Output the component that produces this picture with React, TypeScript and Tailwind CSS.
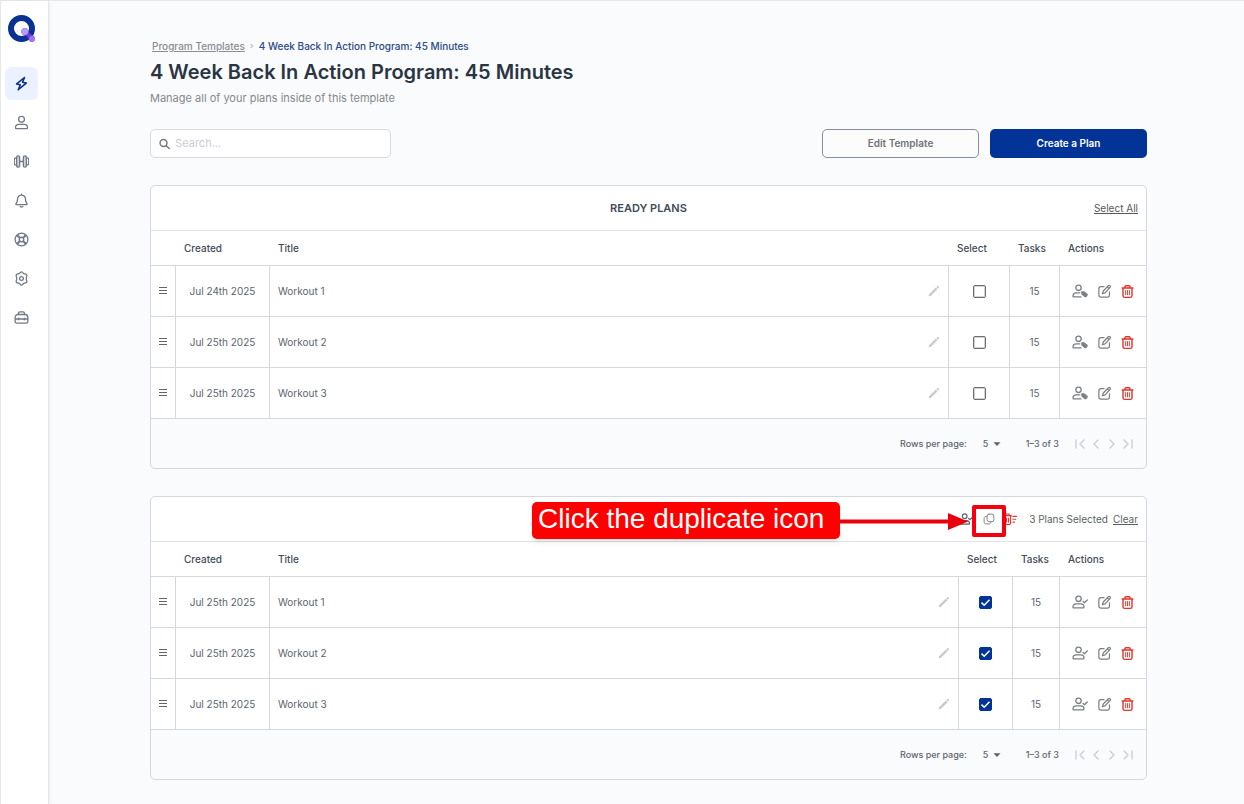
import { useState, type ReactNode } from 'react'

type Plan = { created: string; title: string; tasks: number }

const readyPlans: Plan[] = [
  { created: 'Jul 24th 2025', title: 'Workout 1', tasks: 15 },
  { created: 'Jul 25th 2025', title: 'Workout 2', tasks: 15 },
  { created: 'Jul 25th 2025', title: 'Workout 3', tasks: 15 },
]

const selectedPlans: Plan[] = [
  { created: 'Jul 25th 2025', title: 'Workout 1', tasks: 15 },
  { created: 'Jul 25th 2025', title: 'Workout 2', tasks: 15 },
  { created: 'Jul 25th 2025', title: 'Workout 3', tasks: 15 },
]

function Icon({ children, className = 'size-4', width = 1.3 }: { children: ReactNode; className?: string; width?: number }) {
  return (
    <svg
      viewBox="0 0 16 16"
      className={className}
      fill="none"
      stroke="currentColor"
      strokeWidth={width}
      strokeLinecap="round"
      strokeLinejoin="round"
      aria-hidden="true"
    >
      {children}
    </svg>
  )
}

const navItems = [
  {
    label: 'Programs',
    icon: <path d="M11.2 1.6 2.8 8.4l3.9 1-2.2 5.200 8.600-7-4-1z" />,
  },
  {
    label: 'Clients',
    icon: (
      <>
        <circle cx="8" cy="4.6" r="3.1" />
        <path d="M1.600 13.600c0-2.500 1.600-3.700 3.600-3.700h5.600c2 0 3.600 1.200 3.600 3.700 0 .5-.3.900-.9.900h-11c-.6 0-.9-.4-.9-.9z" />
      </>
    ),
  },
  {
    label: 'Exercises',
    icon: (
      <>
        <rect x="2.800" y="2" width="3.200" height="12" rx="1.500" fill="currentColor" fillOpacity=".3" />
        <rect x="10" y="2" width="3.200" height="12" rx="1.500" fill="currentColor" fillOpacity=".3" />
        <path d="M6 8h4M2.800 4.200h-.6C.9 4.200.3 5 .3 6v4c0 1 .6 1.800 1.900 1.800h.6M13.200 4.200h.6c1.300 0 1.900.8 1.900 1.800v4c0 1-.6 1.800-1.900 1.800h-.6" />
      </>
    ),
  },
  {
    label: 'Notifications',
    icon: (
      <>
        <path d="M8 1.200v1M8 2.200c-2.600 0-4.200 1.900-4.200 4.200 0 3-.9 4-1.700 5-.3.400-.1.900.4.900h11c.5 0 .7-.5.4-.9-.8-1-1.700-2-1.700-5 0-2.300-1.600-4.200-4.200-4.200z" />
        <path d="M6.600 14.400c.7.5 2.100.5 2.800 0" />
      </>
    ),
  },
  {
    label: 'Support',
    icon: (
      <>
        <circle cx="8" cy="8" r="6.800" />
        <circle cx="8" cy="8" r="2.400" />
        <path d="M3.200 3.900 6 6.400M3.900 3.200 6.400 6M12.800 3.900 10 6.400M12.100 3.200 9.600 6M3.200 12.100 6 9.600M3.900 12.800 6.400 10M12.800 12.100 10 9.600M12.100 12.800 9.600 10" />
      </>
    ),
  },
  {
    label: 'Settings',
    icon: (
      <>
        <path d="M6.200 2.300C6.600 1.400 7.200 1 8 1s1.400.4 1.800 1.300c.3.500.8.800 1.400.8 1.100-.1 1.800.2 2.300.9.400.7.300 1.500-.2 2.300-.4.500-.4 1.100 0 1.600v.2c-.4.5-.4 1.100 0 1.600.5.800.6 1.600.2 2.300-.5.700-1.200 1-2.300.9-.6 0-1.100.3-1.400.8C9.400 14.600 8.800 15 8 15s-1.400-.4-1.800-1.300c-.3-.5-.8-.8-1.400-.8-1.100.1-1.800-.2-2.300-.9-.4-.7-.3-1.500.2-2.300.4-.5.4-1.100 0-1.600v-.2c.4-.5.4-1.100 0-1.600-.5-.8-.6-1.600-.2-2.300.5-.7 1.200-1 2.300-.9.600 0 1.100-.3 1.400-.8z" />
        <circle cx="8" cy="8" r="2" />
      </>
    ),
  },
  {
    label: 'Toolbox',
    icon: (
      <>
        <path d="M4.800 4.800V3.600c0-1 .6-1.600 1.600-1.600h3.200c1 0 1.600.6 1.600 1.600v1.200" />
        <path d="M4 4.800h8c1.600 0 2.800 1.500 2.800 3.400v4c0 1-.7 1.700-1.700 1.700H2.900c-1 0-1.700-.7-1.700-1.700v-4c0-1.900 1.200-3.400 2.800-3.400zM1.200 9.600h13.600M5 8.800v1.600M11 8.800v1.600" />
      </>
    ),
  },
]

function Logo() {
  return (
    <svg viewBox="0 0 28 28" className="size-7" aria-hidden="true">
      <circle cx="13.500" cy="13.500" r="10.500" fill="#fff" stroke="#0a3290" strokeWidth="6" />
      <path d="M13.800 18.500a3.600 3.600 0 0 1 6.300-3.500c.8 1.700 1.500 3.300 3 4.300 1.600 1.100 3.700 1.700 3.700 4.500a3.100 3.100 0 0 1-5.900 1.200c-.8-1.900-1.500-3.400-3-4.300-1.300-.8-3.300-.6-4.100-2.200z" fill="#6a3be0" />
      <circle cx="16.700" cy="16.500" r="3.500" fill="#b79cf7" />
      <circle cx="24" cy="24" r="3" fill="#9b74f2" />
    </svg>
  )
}

function Sidebar() {
  return (
    <aside className="w-[49px] shrink-0 border-x border-l-gray-200 border-r-gray-200 bg-white pt-3.5 pl-1 shadow-sm">
      <a href="#home" aria-label="Home" className="ml-[3px] block size-7">
        <Logo />
      </a>
      <nav className="mt-6 flex flex-col gap-1.5" aria-label="Main">
        {navItems.map((item, i) => (
          <a
            key={item.label}
            href="#"
            aria-label={item.label}
            className={
              i === 0
                ? 'flex size-[33px] items-center justify-center rounded-md bg-[#ebf1fe] text-[#0d3186]'
                : 'flex size-[33px] items-center justify-center rounded-md text-[#74798a]'
            }
          >
            <Icon className="size-[15px]" width={i === 0 ? 1.7 : 1.4}>{item.icon}</Icon>
          </a>
        ))}
      </nav>
    </aside>
  )
}

function UserCheckIcon({ className }: { className?: string }) {
  return (
    <Icon className={className}>
      <circle cx="6.500" cy="4.800" r="2.700" />
      <path d="M1 13.200c0-2.300 1.300-3.400 3.200-3.400h4.600c1.900 0 3.200 1.100 3.200 3.400 0 .4-.3.700-.7.700H1.700c-.4 0-.7-.3-.7-.7zM11 7.400l1.400 1.400L15.300 6" />
    </Icon>
  )
}

function UserTagIcon() {
  return (
    <Icon>
      <circle cx="6.500" cy="4.800" r="2.700" />
      <path d="M9 13.900H1.700c-.4 0-.7-.3-.7-.7 0-2.300 1.300-3.400 3.200-3.400h3.600" />
      <path d="M9.800 8.800h2l2.900 2.300c.5.400.5.800.2 1.200l-.8 1c-.3.400-.8.400-1.200.1L10 11.100z" fill="currentColor" />
    </Icon>
  )
}

function EditIcon() {
  return (
    <Icon className="size-[15px]">
      <path d="M7.500 2.800H4.300C2.800 2.800 2 3.600 2 5.100v6.700c0 1.500.8 2.300 2.300 2.300H11c1.500 0 2.300-.8 2.300-2.300V8.500" />
      <path d="M12.100 1.900c.5-.5 1.300-.5 1.800 0s.5 1.300 0 1.800L8.600 9.400l-2.900 1 1-2.900zM11 3l1.800 1.800" />
    </Icon>
  )
}

function TrashIcon() {
  return (
    <Icon className="size-[15px] text-[#e0352b]" width={1.5}>
      <path d="M2.300 4.200h11.400M5.300 4V2.700c0-.6.300-.9.900-.9h3.600c.6 0 .9.300.9.900V4M3.200 4.300v8.200c0 1.200.6 1.800 1.800 1.800h6c1.200 0 1.800-.6 1.800-1.800V4.300" />
      <path d="M6 7v4.500M8 7v4.500M10 7v4.500" strokeWidth="1" />
    </Icon>
  )
}

function PencilIcon() {
  return (
    <svg viewBox="0 0 12 12" className="size-3 text-[#c9cbcd]" aria-hidden="true">
      <path d="M.7 11.200 1 9.200l6.800-6.700 1.800 1.800-6.900 6.800zM8.300 2l.9-.9c.3-.3.700-.3 1 0l.8.800c.3.300.3.700 0 1l-.9.900z" fill="currentColor" />
    </svg>
  )
}

function PlanRow({ plan, assigned, label }: { plan: Plan; assigned: boolean; label: string }) {
  const [checked, setChecked] = useState(assigned)
  const cell = 'border-r border-b border-[#d5d9de]'
  return (
    <tr className="h-[51px] text-center text-[#5d6470]">
      <td className={cell}>
        <button aria-label={`Move ${plan.title}`} className="block w-full">
          <svg viewBox="0 0 10 10" className="mx-auto size-2.5" stroke="#62666b" strokeWidth="1" aria-hidden="true">
            <path d="M1 1.500h8M1 4.500h8M1 7.500h8" />
          </svg>
        </button>
      </td>
      <td className={cell}>{plan.created}</td>
      <td className={cell}>
        <div className="flex items-center justify-between px-2">
          {plan.title}
          <button aria-label={`Rename ${plan.title}`}>
            <PencilIcon />
          </button>
        </div>
      </td>
      <td className={cell}>
        <label className="relative mx-auto block size-[13px]">
          <input
            type="checkbox"
            aria-label={`Select ${plan.title} in ${label}`}
            checked={checked}
            onChange={(e) => setChecked(e.target.checked)}
            className="block size-[13px] appearance-none rounded-xs border border-[#6e6e6e] outline outline-[#6e6e6e]/30 -outline-offset-2 checked:border-[#023396] checked:bg-[#023396] checked:outline-none"
          />
          {checked && (
            <svg viewBox="0 0 13 13" className="pointer-events-none absolute inset-0 size-[13px]" fill="none" stroke="#fff" strokeWidth="1.500" aria-hidden="true">
              <path d="m2.500 6.600 2.700 2.700 5.300-5.500" />
            </svg>
          )}
        </label>
      </td>
      <td className={cell}>{plan.tasks}</td>
      <td className="border-b border-[#d5d9de]">
        <div className="flex items-center pl-3 text-[#7c8084]">
          <button aria-label={`Assign ${plan.title}`}>{assigned ? <UserCheckIcon /> : <UserTagIcon />}</button>
          <button aria-label={`Edit ${plan.title}`} className="ml-[9px]"><EditIcon /></button>
          <button aria-label={`Delete ${plan.title}`} className="ml-2"><TrashIcon /></button>
        </div>
      </td>
    </tr>
  )
}

function Pagination() {
  const arrows = [
    { label: 'First page', d: 'M4 4v8M12 4 8 8l4 4' },
    { label: 'Previous page', d: 'M10 4 6 8l4 4' },
    { label: 'Next page', d: 'm6 4 4 4-4 4' },
    { label: 'Last page', d: 'm4 4 4 4-4 4M12 4v8' },
  ]
  return (
    <footer className="flex h-[49px] items-center justify-end pr-2.5 text-[9px] font-medium text-[#5d6470]">
      <label className="flex items-center gap-4">
        Rows per page:
        <span className="relative">
          <select defaultValue="5" className="block w-[18px] appearance-none bg-transparent">
            <option>5</option>
            <option>10</option>
            <option>25</option>
          </select>
          <svg viewBox="0 0 8 8" className="pointer-events-none absolute top-1 right-0 size-2" fill="currentColor" aria-hidden="true">
            <path d="M.5 2.200h7L4 5.900z" />
          </svg>
        </span>
      </label>
      <span className="ml-[25px]">1–3 of 3</span>
      <div className="ml-[13px] flex text-[#c9ccd0]">
        {arrows.map((a) => (
          <button key={a.label} aria-label={a.label}>
            <Icon><path d={a.d} /></Icon>
          </button>
        ))}
      </div>
    </footer>
  )
}

function PlanTable({ label, plans, assigned, header }: { label: string; plans: Plan[]; assigned: boolean; header: ReactNode }) {
  return (
    <section className="rounded-[5px] border border-[#d5d9de] text-[10px] leading-4" aria-label={label}>
      <div className="relative h-[45px] rounded-t-[5px] border-b border-[#e0e3e7] bg-white">{header}</div>
      <table className="w-full table-fixed border-separate border-spacing-0 bg-white">
        <colgroup>
          <col className="w-[25px]" />
          <col className="w-[94px]" />
          <col />
          <col className={assigned ? 'w-[54px]' : 'w-[61px]'} />
          <col className={assigned ? 'w-[47px]' : 'w-[50px]'} />
          <col className="w-[86px]" />
        </colgroup>
        <thead>
          <tr className="h-[35px] text-left text-[#454b57]">
            <td className="border-b border-[#d5d9de]" />
            {['Created', 'Title', 'Select', 'Tasks', 'Actions'].map((name) => (
              <th key={name} scope="col" className="border-b border-[#d5d9de] pl-2 font-medium">{name}</th>
            ))}
          </tr>
        </thead>
        <tbody>
          {plans.map((plan) => (
            <PlanRow key={plan.title} plan={plan} assigned={assigned} label={label} />
          ))}
        </tbody>
      </table>
      <Pagination />
    </section>
  )
}

function Callout() {
  return (
    <div className="pointer-events-none absolute top-[5px] right-[140px] flex items-center">
      <div className="flex h-[37px] w-[308px] items-center rounded-[5px] bg-[#fe0000] pb-1 pl-1.5 font-['Liberation_Sans',Arial,sans-serif] text-[28px] whitespace-nowrap text-white shadow-md">
        Click the duplicate icon
      </div>
      <svg viewBox="0 0 132 18" className="h-[18px] w-[132px]" fill="#e9000d" aria-hidden="true">
        <path d="M0 7.500h108V1l20 8.500-20 8.500v-6.500H0z" />
      </svg>
      <div className="h-8 w-[34px] rounded-xs border-4 border-[#f5000f]" />
    </div>
  )
}

export default function App() {
  return (
    <div className="flex min-h-screen border-t border-gray-200 bg-[#fafbfd] font-[Inter,sans-serif]">
      <Sidebar />
      <main className="min-w-0 flex-1 pt-[37px] pr-[97px] pb-5 pl-[101px]">
        <nav className="flex items-center pl-0.5 text-[10px] leading-4 font-medium" aria-label="Breadcrumb">
          <a href="#templates" className="text-[#8a8d91] underline">Program Templates</a>
          <svg viewBox="0 0 6 8" className="mx-[5px] h-2 w-1" fill="none" stroke="#777" aria-hidden="true">
            <path d="m1 1 3 3-3 3" />
          </svg>
          <span className="text-[#2b4a87]">4 Week Back In Action Program: 45 Minutes</span>
        </nav>
        <h1 className="mt-1 text-xl leading-7 font-semibold text-[#2a3544]">4 Week Back In Action Program: 45 Minutes</h1>
        <p className="mt-1 text-[11px] leading-4 text-[#85888b]">Manage all of your plans inside of this template</p>

        <div className="mt-[23px] flex items-center justify-between">
          <label className="flex h-[29px] w-[241px] items-center gap-[5px] rounded-[5px] border border-[#d8dbdf] bg-white pl-2 text-[#777]">
            <Icon className="size-3" width={2}>
              <circle cx="6.500" cy="6.500" r="5" />
              <path d="m10.500 10.500 4 4" />
            </Icon>
            <input aria-label="Search plans" placeholder="Search..." className="w-full min-w-0 bg-transparent text-[11px] outline-none placeholder:text-[#cacccf]" />
          </label>
          <div className="flex gap-[11px] text-[10px] font-semibold">
            <button className="h-[29px] w-[157px] rounded-[5px] border border-[#888c9b] bg-[#fcfcfc] text-[#707275]">Edit Template</button>
            <button className="h-[29px] w-[157px] rounded-[5px] bg-[#023396] text-white">Create a Plan</button>
          </div>
        </div>

        <div className="mt-[27px] flex flex-col gap-[27px]">
          <PlanTable
            label="Ready plans"
            plans={readyPlans}
            assigned={false}
            header={
              <div className="grid h-full grid-cols-3 items-center px-2">
                <h2 className="col-start-2 text-center text-[11px] font-semibold text-[#444b57]">READY PLANS</h2>
                <button className="justify-self-end text-[#55585c] underline">Select All</button>
              </div>
            }
          />
          <PlanTable
            label="Assigned plans"
            plans={selectedPlans}
            assigned
            header={
              <>
                <div className="flex h-full items-center justify-end px-2 text-[#5b5f64]">
                  <button aria-label="Assign selected"><UserCheckIcon className="size-3.5" /></button>
                  <button aria-label="Duplicate selected" className="ml-2.5 text-[#85888c]">
                    <Icon className="size-3">
                      <rect x="5.500" y="1.500" width="9" height="10" rx="2.500" />
                      <path d="M5.500 4.500H4c-1.500 0-2.500 1-2.500 2.500v5c0 1.500 1 2.500 2.500 2.500h4c1.500 0 2.500-1 2.500-2.500" />
                    </Icon>
                  </button>
                  <button aria-label="Delete selected" className="ml-2 text-[#e0352b]">
                    <Icon className="size-3.5">
                      <path d="M.8 4.200h8.800M3.300 4V2.300h3.800V4M1.700 4.300v8.300c0 1 .5 1.500 1.500 1.500h4c1 0 1.500-.5 1.500-1.500V4.300M4 7v4.500M6.400 7v4.500M11.500 5h4M11.500 8.300h3M11.500 11.600h1.500" />
                    </Icon>
                  </button>
                  <span className="ml-3">3 Plans Selected</span>
                  <button className="ml-[5px] underline">Clear</button>
                </div>
                <Callout />
              </>
            }
          />
        </div>
      </main>
    </div>
  )
}
